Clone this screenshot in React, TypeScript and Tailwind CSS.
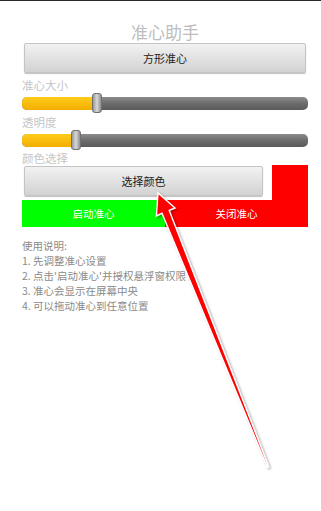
const font = { fontFamily: '"Noto Sans CJK SC", "Noto Sans", sans-serif' };

const GrayButton = ({ label, className }: { label: string; className?: string }) => (
    <div
        className={`flex items-center justify-center h-[30px] rounded-[2px] border border-[#c4c4c4] bg-gradient-to-b from-[#f2f2f2] to-[#d2d2d2] shadow-[0_1px_1px_rgba(0,0,0,0.25)] text-[11px] text-[#222] ${className ?? ""}`}
    >
        {label}
    </div>
);

const Slider = ({ value }: { value: number }) => (
    <div className="relative h-[20px] flex items-center">
        <div className="w-full h-[13px] rounded-[5px] bg-gradient-to-b from-[#8c8c8c] via-[#6c6c6c] to-[#5a5a5a] overflow-hidden">
            <div className="h-full bg-gradient-to-b from-[#ffcc1a] to-[#f2ae00]" style={{ width: value }} />
        </div>
        <div
            className="absolute top-0 h-[20px] w-[10px] rounded-[3px] border border-[#6f6f6f] bg-gradient-to-r from-[#9a9a9a] via-[#d8d8d8] to-[#8e8e8e]"
            style={{ left: value - 5 }}
        />
    </div>
);

const Arrow = () => (
    <svg className="absolute left-0 top-0 pointer-events-none" width="321" height="511" viewBox="0 0 321 511">
        <defs>
            <filter id="sh" x="-20%" y="-20%" width="140%" height="140%">
                <feDropShadow dx="1.5" dy="1.5" stdDeviation="1.2" floodColor="#000" floodOpacity="0.35" />
            </filter>
        </defs>
        <polygon
            points="158,193 175,208 169.2,210.4 268.6,466.6 267.4,467.2 162,213.2 156.4,216"
            fill="#ff0000"
            stroke="#ffffff"
            strokeWidth="1.4"
            strokeLinejoin="miter"
            filter="url(#sh)"
        />
    </svg>
);

const App = () => {
    const steps = [
        "使用说明:",
        "1. 先调整准心设置",
        "2. 点击'启动准心'并授权悬浮窗权限",
        "3. 准心会显示在屏幕中央",
        "4. 可以拖动准心到任意位置",
    ];

    return (
        <div className="relative w-[321px] h-[511px] bg-white overflow-hidden" style={font}>
            <div className="h-[1px] bg-[#2a2a2a]" />

            <div className="pl-[22px] pr-[13px]">
                <div className="mt-[21px] text-center text-[17px] leading-[20px] text-[#bdbdbd]">准心助手</div>

                <GrayButton label="方形准心" className="mx-[2px] mt-[1px]" />

                <div className="mt-[5px] text-[11.5px] leading-[14px] text-[#c6c6c6]">准心大小</div>
                <div className="mt-[1px]">
                    <Slider value={75} />
                </div>

                <div className="mt-[2px] text-[11.5px] leading-[14px] text-[#c6c6c6]">透明度</div>
                <div className="mt-[1px]">
                    <Slider value={54} />
                </div>

                <div className="mt-[1px] text-[11.5px] leading-[14px] text-[#c6c6c6]">颜色选择</div>

                <div className="flex items-start h-[35px]">
                    <GrayButton label="选择颜色" className="flex-1 ml-[2px] mt-[1px]" />
                    <div className="w-[36px] h-full ml-[9px] bg-[#ff0000]" />
                </div>

                <div className="flex h-[27px] text-[10.5px] text-white">
                    <div className="flex-1 flex items-center justify-center bg-[#00ff00]">启动准心</div>
                    <div className="flex-1 flex items-center justify-center bg-[#ff0000]">关闭准心</div>
                </div>

                <div className="mt-[11px] text-[10.5px] leading-[15px] text-[#8a8a8a]">
                    {steps.map((s, i) => (
                        <div key={i}>{s}</div>
                    ))}
                </div>
            </div>

            <Arrow />
        </div>
    );
};

export default App;
